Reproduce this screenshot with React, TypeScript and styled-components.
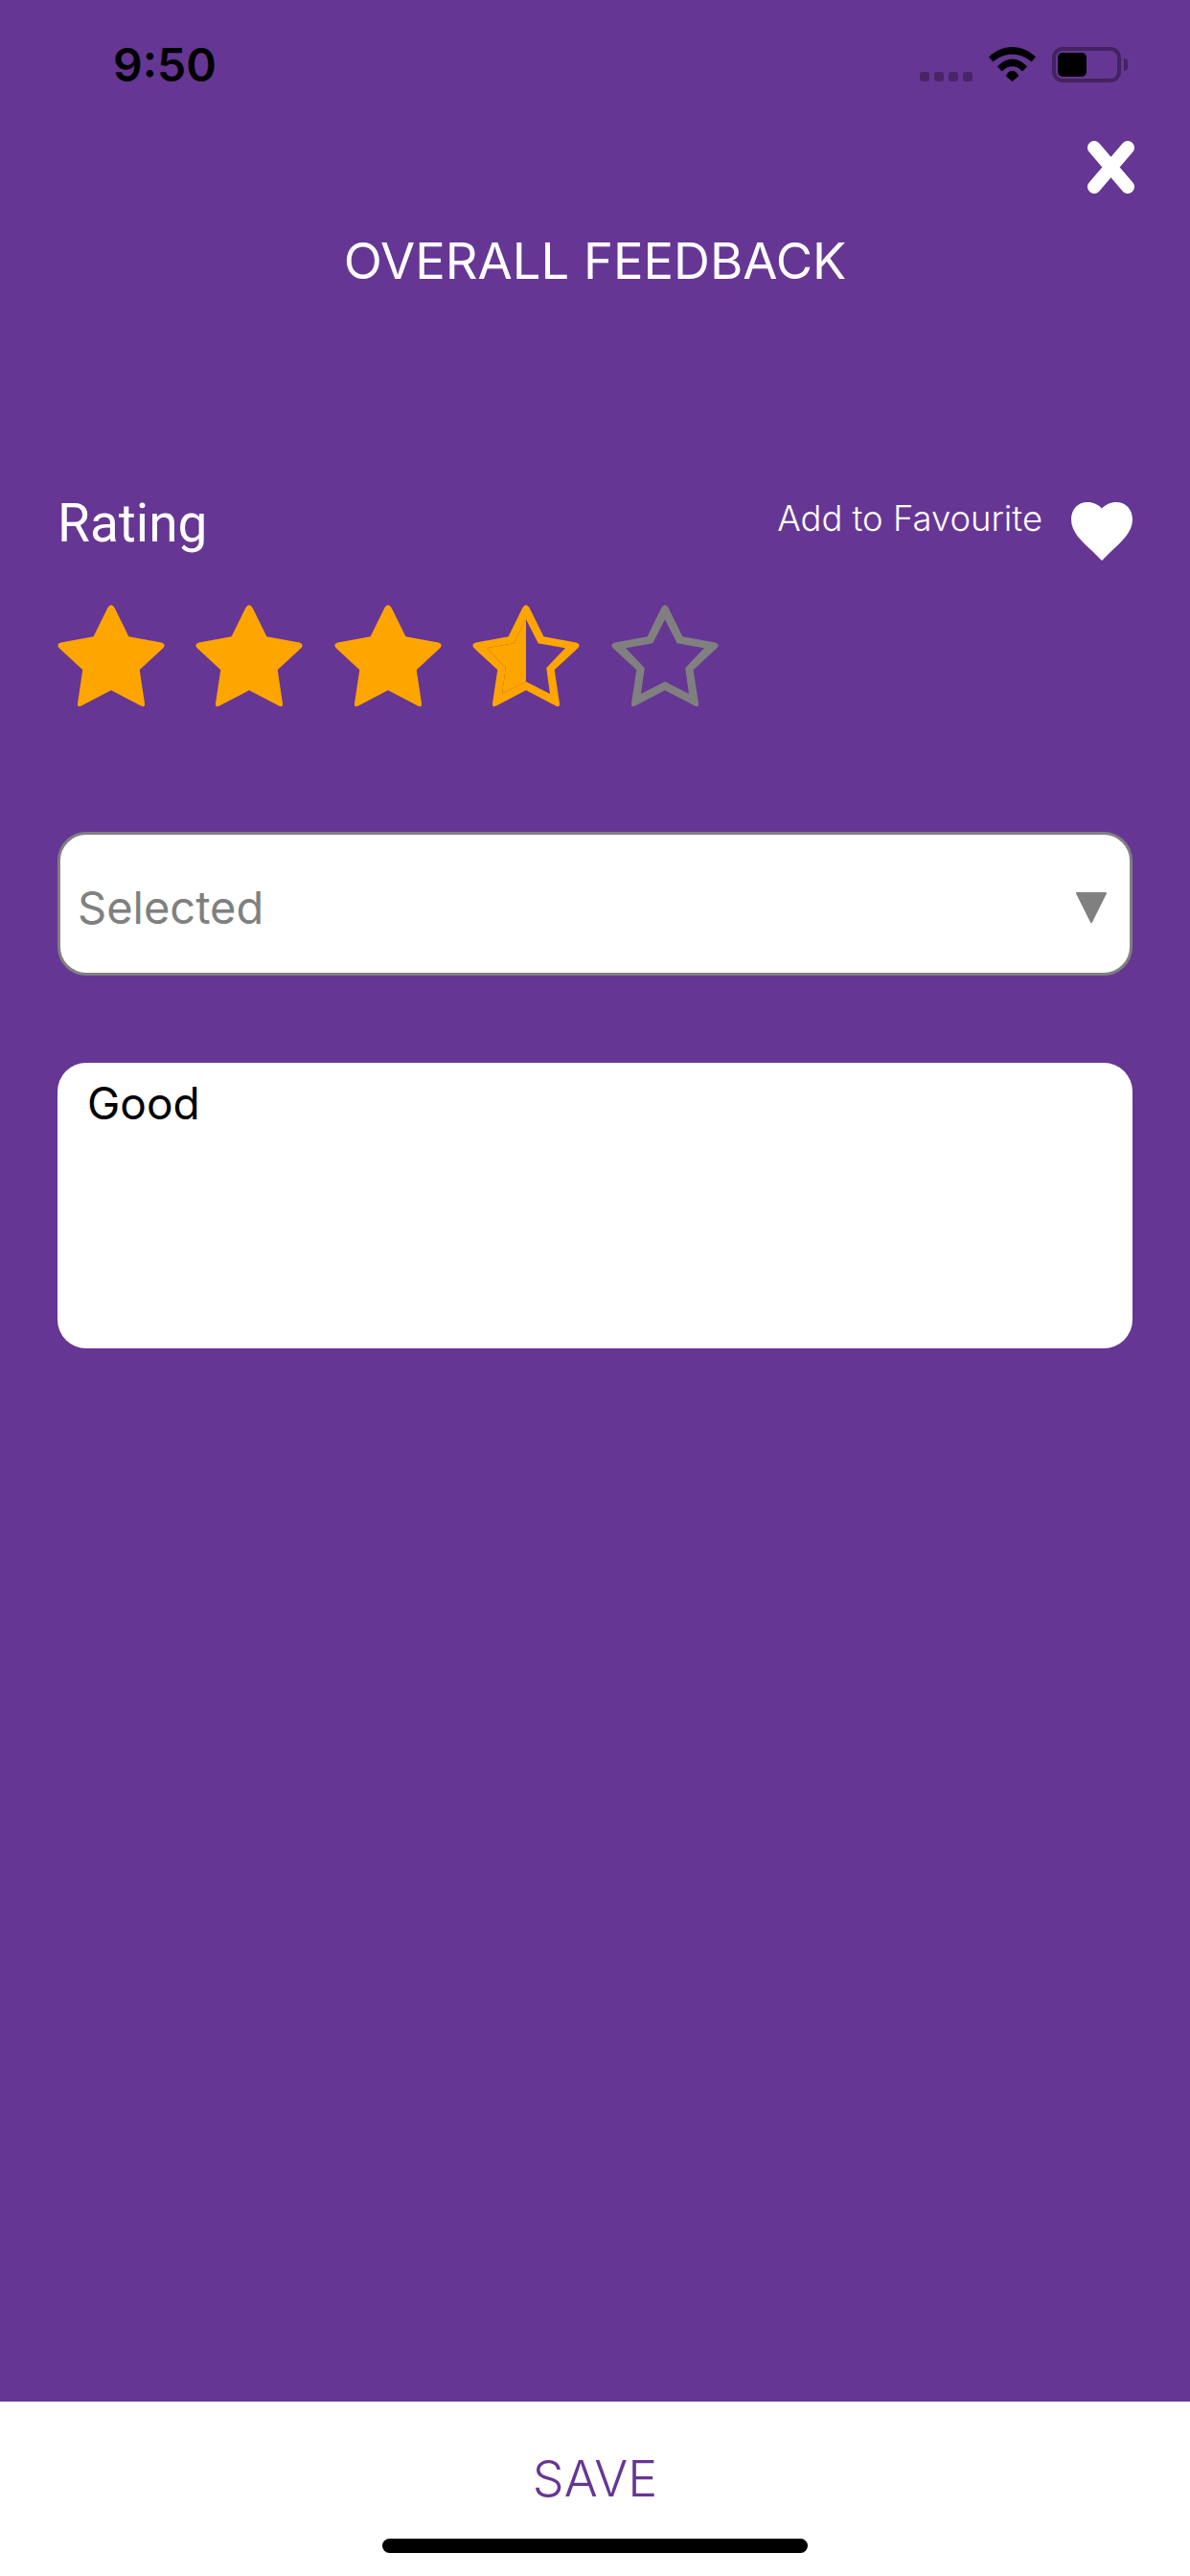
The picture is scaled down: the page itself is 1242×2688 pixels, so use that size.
import React from 'react';
import styled, { createGlobalStyle } from 'styled-components';

const PURPLE = '#663694';
const ORANGE = '#FFA500';
const GREY = '#808080';

const STAR_OUTER = 'M52.5 3Q56 -2.5 59.5 3L74.4 33.3L108.5 39.5Q113.5 41 110.5 45L85.7 68L91 103Q91.5 108 87 105.5L56 89.3L25 105.5Q20.5 108 21 103L26.3 68L1.5 45Q-1.5 41 3.5 39.5L37.6 33.3Z';
const STAR_INNER = 'M56 15.3L68.7 40.3L97 45.3L77.2 66L81 93L56 80.3L31 93L34.8 66L15 45.3L43.3 40.3Z';
const STAR_INNER_LEFT = 'M56 15.3L43.3 40.3L15 45.3L34.8 66L31 93L56 80.3Z';

type StarKind = 'full' | 'half' | 'empty';

const ratingStars: StarKind[] = ['full', 'full', 'full', 'half', 'empty'];

const GlobalStyle = createGlobalStyle`
  html, body {
    margin: 0;
    padding: 0;
    background: ${PURPLE};
  }
`;

const Page = styled.div`
  width: 1242px;
  height: 2688px;
  display: flex;
  flex-direction: column;
  background: ${PURPLE};
  font-family: Inter, "Liberation Sans", sans-serif;
`;

const StatusBar = styled.div`
  height: 147px;
  box-sizing: border-box;
  padding: 49px 65px 0 118px;
  display: flex;
  justify-content: space-between;
  align-items: flex-start;
`;

const Time = styled.div`
  font-size: 48px;
  line-height: 37px;
  font-weight: 600;
  color: #000;
`;

const StatusIcons = styled.div`
  display: flex;
  align-items: flex-end;
  gap: 17px;
  height: 37px;
`;

const SignalDots = styled.div`
  display: flex;
  gap: 5px;
  padding-bottom: 1px;
`;

const SignalDot = styled.span`
  width: 10px;
  height: 10px;
  border-radius: 3px;
  background: rgba(0, 0, 0, 0.3);
`;

const Wifi = styled.svg`
  display: block;
  width: 49px;
  height: 36px;
  margin-bottom: 1px;
`;

const Battery = styled.div`
  display: flex;
  align-items: center;
  gap: 3px;
`;

const BatteryShell = styled.div`
  width: 72px;
  height: 37px;
  box-sizing: border-box;
  padding: 2px;
  border: 4px solid rgba(0, 0, 0, 0.35);
  border-radius: 11px;
`;

const BatteryLevel = styled.div`
  width: 30px;
  height: 25px;
  border-radius: 5px;
  background: #000;
`;

const BatteryNub = styled.div`
  width: 4px;
  height: 13px;
  border-radius: 0 6px 6px 0;
  background: rgba(0, 0, 0, 0.35);
`;

const CloseRow = styled.div`
  display: flex;
  justify-content: flex-end;
  padding-right: 58px;
`;

const CloseIcon = styled.svg`
  display: block;
  width: 49px;
  height: 55px;
`;

const Title = styled.h1`
  margin: 40px 0 0;
  text-align: center;
  font-size: 52.5px;
  line-height: 60px;
  font-weight: 400;
  color: #fff;
`;

const Form = styled.div`
  flex: 1;
  padding: 0 60px;
  margin-top: 220px;
`;

const RatingRow = styled.div`
  display: flex;
  justify-content: space-between;
  align-items: flex-start;
`;

const RatingLabel = styled.div`
  margin-top: -8px;
  font-family: Roboto, "Liberation Sans", sans-serif;
  font-size: 55px;
  line-height: 64px;
  font-weight: 370;
  color: #fff;
`;

const FavouriteWrap = styled.div`
  display: flex;
  align-items: flex-start;
  gap: 30px;
`;

const FavouriteLabel = styled.div`
  margin-top: -3px;
  font-size: 36.4px;
  line-height: 44px;
  font-weight: 350;
  color: #fff;
`;

const Heart = styled.svg`
  display: block;
  width: 64px;
  height: 61px;
  margin-top: 2px;
`;

const Stars = styled.div`
  display: flex;
  gap: 32.5px;
  margin: 46px 0 0 -0.5px;
`;

const StarIcon = styled.svg`
  display: block;
  width: 112px;
  height: 108px;
  overflow: visible;
`;

const Dropdown = styled.div`
  height: 150px;
  box-sizing: border-box;
  margin-top: 129px;
  padding: 0 24px 0 18px;
  display: flex;
  justify-content: space-between;
  align-items: center;
  background: #fff;
  border: 3px solid ${GREY};
  border-radius: 30px;
`;

const DropdownValue = styled.div`
  padding-top: 8px;
  font-size: 47px;
  line-height: 56px;
  font-weight: 380;
  color: ${GREY};
`;

const Caret = styled.svg`
  display: block;
  width: 32px;
  height: 32px;
  margin-top: 8px;
`;

const Comment = styled.div`
  height: 298px;
  box-sizing: border-box;
  margin-top: 91px;
  padding: 14px 31px;
  background: #fff;
  border-radius: 30px;
  font-size: 46px;
  line-height: 56px;
  font-weight: 400;
  color: #000;
`;

const Footer = styled.div`
  height: 182px;
  box-sizing: border-box;
  padding-top: 51px;
  display: flex;
  flex-direction: column;
  align-items: center;
  background: #fff;
`;

const SaveLabel = styled.div`
  font-size: 52px;
  line-height: 60px;
  font-weight: 350;
  color: ${PURPLE};
`;

const HomeBar = styled.div`
  width: 444px;
  height: 15px;
  margin-top: 32px;
  border-radius: 8px;
  background: #000;
`;

const Star = ({ kind }: { kind: StarKind }) => {
  const color = kind === 'empty' ? GREY : ORANGE;

  if (kind === 'full') {
    return (
      <StarIcon viewBox='0 0 112 108'>
        <path d={STAR_OUTER} fill={color} />
      </StarIcon>
    );
  }

  return (
    <StarIcon viewBox='0 0 112 108'>
      <path d={`${STAR_OUTER}${STAR_INNER}`} fill={color} fillRule='evenodd' />
      {kind === 'half' && <path d={STAR_INNER_LEFT} fill={color} />}
    </StarIcon>
  );
};

export default function App () {
  return (
    <Page>
      <GlobalStyle />
      <StatusBar>
        <Time>9:50</Time>
        <StatusIcons>
          <SignalDots>
            <SignalDot />
            <SignalDot />
            <SignalDot />
            <SignalDot />
          </SignalDots>
          <Wifi viewBox='0 0 49 36'>
            <path d='M0 10.5C14 -3.5 35 -3.5 49 10.5L44.5 15.5C33 5 16 5 4.5 15.5Z' />
            <path d='M9 20.5C18 10 31 10 40 20.5L35 25.5C29 18.5 20 18.5 14 25.5Z' />
            <path d='M17.7 30.3C21.5 23 27.5 23 31.3 30.3L24.5 36Z' />
          </Wifi>
          <Battery>
            <BatteryShell>
              <BatteryLevel />
            </BatteryShell>
            <BatteryNub />
          </Battery>
        </StatusIcons>
      </StatusBar>

      <CloseRow>
        <CloseIcon viewBox='0 0 49 55'>
          <path d='M7 7L42 48M42 7L7 48' fill='none' stroke='#fff' strokeLinecap='round' strokeWidth={14} />
        </CloseIcon>
      </CloseRow>

      <Title>OVERALL FEEDBACK</Title>

      <Form>
        <RatingRow>
          <RatingLabel>Rating</RatingLabel>
          <FavouriteWrap>
            <FavouriteLabel>Add to Favourite</FavouriteLabel>
            <Heart viewBox='0 0 64 61'>
              <path
                d='M32 6.5C28 2.5 23 0 17 0C7 0 0 7.5 0 18C0 31 11 41 22 51L32 61L42 51C53 41 64 31 64 18C64 7.5 57 0 47 0C41 0 36 2.5 32 6.5Z'
                fill='#fff'
              />
            </Heart>
          </FavouriteWrap>
        </RatingRow>

        <Stars>
          {ratingStars.map((kind, index) => (
            <Star key={index} kind={kind} />
          ))}
        </Stars>

        <Dropdown>
          <DropdownValue>Selected</DropdownValue>
          <Caret viewBox='0 0 32 32'>
            <path d='M1 1H31L16 31Z' fill={GREY} stroke={GREY} strokeLinejoin='round' strokeWidth={2} />
          </Caret>
        </Dropdown>

        <Comment>Good</Comment>
      </Form>

      <Footer>
        <SaveLabel>SAVE</SaveLabel>
        <HomeBar />
      </Footer>
    </Page>
  );
}
